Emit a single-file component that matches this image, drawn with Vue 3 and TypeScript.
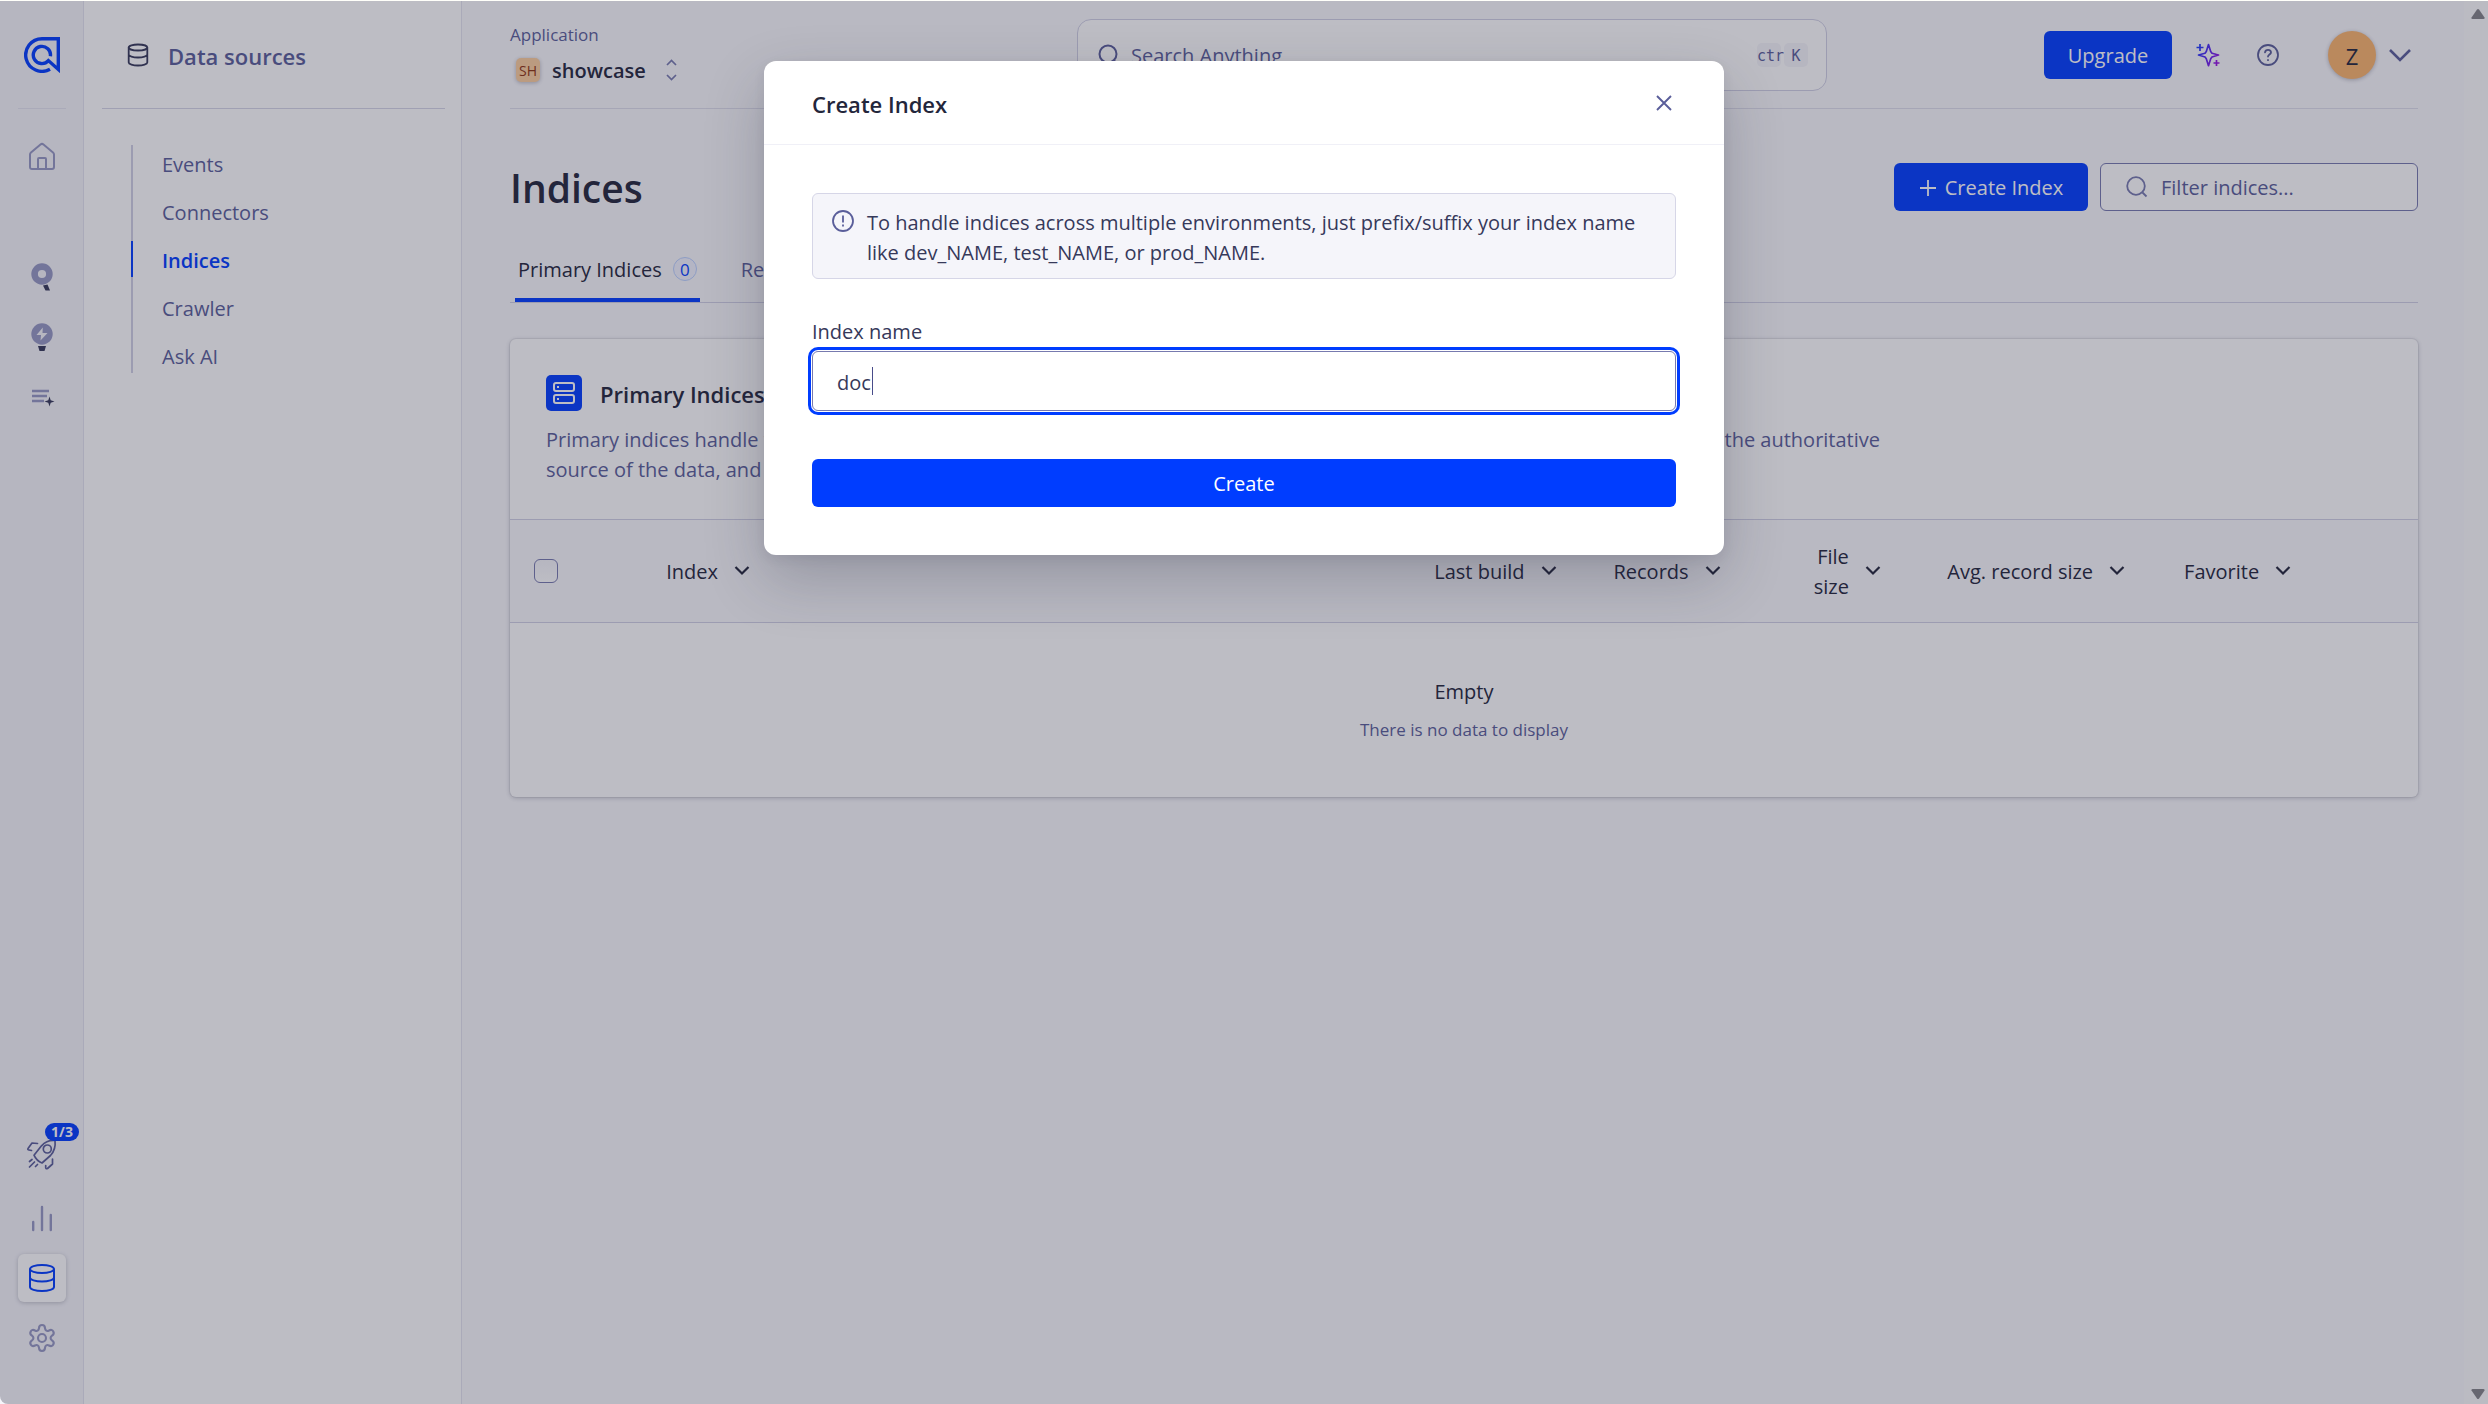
<script setup lang="ts">
import { ref } from 'vue'

interface Column {
  label: string
  width: string
  align: 'left' | 'right'
}

const navItems: string[] = ['Events', 'Connectors', 'Indices', 'Crawler', 'Ask AI']
const activeItem = ref<string>('Indices')

const columns: Column[] = [
  { label: 'Index', width: '36.1%', align: 'left' },
  { label: 'Last build', width: '12.4%', align: 'right' },
  { label: 'Records', width: '8.6%', align: 'right' },
  { label: 'File\nsize', width: '8.4%', align: 'right' },
  { label: 'Avg. record size', width: '12.8%', align: 'right' },
  { label: 'Favorite', width: '15.3%', align: 'left' },
]

const indexName = ref<string>('doc')
const filter = ref<string>('')
const allSelected = ref<boolean>(false)
</script>

<template>
  <div class="page">
    <nav class="rail" aria-label="Products">
      <a class="logo" href="#" aria-label="Home page">
        <svg width="36" height="36" viewBox="0 0 36 36" fill="none" stroke="currentColor" stroke-width="3.4">
          <path d="M26 32.2A16.3 16.3 0 1 1 18 1.7H34.3V32.4L24.4 23.6A8.6 8.6 0 1 1 26.4 19.2" />
        </svg>
      </a>
      <a class="rail-item" href="#" aria-label="Overview">
        <svg width="30" height="30" viewBox="0 0 30 30" fill="none" stroke="currentColor" stroke-width="2" stroke-linejoin="round" stroke-linecap="round">
          <path d="M3 12.5c0-1 .3-1.500 1-2.100L13.500 2.500c1-.8 2-.8 3 0L26 10.400c.7.600 1 1.100 1 2.100V25c0 1.300-.7 2-2 2H5c-1.300 0-2-.7-2-2z" />
          <path d="M11 27V17c0-.7.300-1 1-1h6c.7 0 1 .3 1 1v10" />
        </svg>
      </a>
      <div class="rail-group">
        <a class="rail-item" href="#" aria-label="Search">
          <svg width="30" height="32" viewBox="0 0 30 32">
            <circle cx="15" cy="13" r="7.400" fill="none" stroke="currentColor" stroke-width="6.600" />
            <path class="ink" d="M16 24.500l4.500-1 2.500 6h-4.500z" />
          </svg>
        </a>
        <a class="rail-item" href="#" aria-label="Recommend">
          <svg width="30" height="32" viewBox="0 0 30 32">
            <circle cx="15" cy="13" r="10.700" fill="currentColor" />
            <path class="paper" d="M15.800 6.500L9.500 14h4.500l-.5 5.500L20.500 12H15.500z" />
            <path class="ink" d="M11 25h8l-1.500 5h-5z" />
          </svg>
        </a>
        <a class="rail-item" href="#" aria-label="Merchandising">
          <svg width="30" height="24" viewBox="0 0 30 24">
            <path d="M5 6h17M5 11h15M5 16h12" stroke="currentColor" stroke-width="2.400" />
            <path class="ink" d="M22.500 11.500l1.200 3.800 3.800 1.200-3.800 1.200-1.200 3.800-1.200-3.800-3.800-1.200 3.800-1.200z" />
          </svg>
        </a>
      </div>
      <div class="rail-foot">
        <a class="rail-item rocket" href="#" aria-label="Getting started">
          <svg width="32" height="32" viewBox="0 0 32 32" fill="none" stroke="currentColor" stroke-width="1.700" stroke-linejoin="round" stroke-linecap="round">
            <path d="M29 2.500c.7 6-.8 11-4.500 15L16 25c-3-1-6.500-4.500-8-7.800l7.500-9.400C19 4 23.500 2 29 2.500z" />
            <circle cx="21.300" cy="11" r="4" />
            <path d="M11.500 5.500L6 5 2 10.500c-.4 1 0 1.500 1 1.500l2.500.5M26.500 21v5l-5 4.500c-1 .5-1.700.2-1.800-.8V27.500M3.500 23.500l2.500-2M3.500 29l5-5M9.500 28.500l2-2" />
          </svg>
          <span class="progress">1/3</span>
        </a>
        <a class="rail-item" href="#" aria-label="Observe">
          <svg width="30" height="30" viewBox="0 0 30 30" stroke="currentColor" stroke-width="2.400" stroke-linecap="round">
            <path d="M6.200 19v8M15 4v23M23.800 12v15" />
          </svg>
        </a>
        <a class="rail-item current" href="#" aria-label="Data sources">
          <svg width="30" height="30" viewBox="0 0 30 30" fill="none" stroke="currentColor" stroke-width="2">
            <ellipse cx="15" cy="6" rx="12" ry="4" />
            <path d="M3 6v18c0 2.200 5.400 4 12 4s12-1.800 12-4V6M3 14.500c0 2.200 5.400 4 12 4s12-1.800 12-4" />
          </svg>
        </a>
        <a class="rail-item" href="#" aria-label="Settings">
          <svg width="30" height="30" viewBox="0 0 30 30" fill="none" stroke="currentColor" stroke-width="2.100" stroke-linejoin="round">
            <path d="M12 5.200C12 3 13.200 2 15 2s3 1 3 3.200c.2 2.400 2 3.400 4 2.300 2-1.200 3.500-.6 4.300.9s.6 3-1.300 4.200c-1.900 1.300-1.900 3.500 0 4.800 1.900 1.200 2.100 2.700 1.300 4.200s-2.300 2.100-4.300.9c-2-1.100-3.800-.1-4 2.300C18 27 16.800 28 15 28s-3-1-3-3.200c-.2-2.400-2-3.400-4-2.300-2 1.200-3.500.6-4.300-.9s-.6-3 1.300-4.200c1.900-1.300 1.900-3.500 0-4.800-1.900-1.200-2.100-2.700-1.300-4.200s2.300-2.100 4.300-.9c2 1.100 3.800.1 4-2.300z" />
            <circle cx="15" cy="15" r="4" />
          </svg>
        </a>
      </div>
    </nav>

    <aside class="panel">
      <div class="panel-head">
        <svg width="24" height="24" viewBox="0 0 24 24" fill="none" stroke="currentColor" stroke-width="1.800">
          <ellipse cx="12" cy="4.500" rx="9.300" ry="3" />
          <path d="M2.700 4.500v15c0 1.600 4.200 3 9.300 3s9.300-1.400 9.300-3v-15M2.700 11.500c0 1.600 4.200 3 9.300 3s9.300-1.400 9.300-3" />
        </svg>
        <span>Data sources</span>
      </div>
      <ul class="panel-list">
        <li v-for="item in navItems" :key="item" :class="{ active: item === activeItem }">
          <a href="#" @click.prevent="activeItem = item">{{ item }}</a>
        </li>
      </ul>
    </aside>

    <main class="main">
      <header class="topbar">
        <div class="application">
          <span class="application-label">Application</span>
          <button class="application-picker" type="button">
            <span class="app-badge">SH</span>
            <span class="app-name">showcase</span>
            <svg width="14" height="24" viewBox="0 0 14 24" fill="none" stroke="currentColor" stroke-width="1.700">
              <path d="M3 7l4.500-4.500L12 7M3 17l4.500 4.500L12 17" />
            </svg>
          </button>
        </div>
        <button class="search" type="button">
          <svg width="24" height="24" viewBox="0 0 24 24" fill="none" stroke="currentColor" stroke-width="2">
            <circle cx="11" cy="11" r="8.500" /><path d="M17 17.500l4.500 4.500" />
          </svg>
          <span class="search-text">Search Anything</span>
          <kbd>ctr</kbd><kbd>K</kbd>
        </button>
        <div class="account">
          <button class="primary" type="button">Upgrade</button>
          <button class="plain" type="button" aria-label="Assistant">
            <svg width="24" height="24" viewBox="0 0 24 24" fill="none" stroke="url(#spark)" stroke-width="1.700" stroke-linejoin="round">
              <defs>
                <linearGradient id="spark" gradientUnits="userSpaceOnUse" x1="0" y1="6" x2="24" y2="18">
                  <stop offset="0" stop-color="#1a3dff" /><stop offset="1" stop-color="#a010e0" />
                </linearGradient>
              </defs>
              <path d="M12.500 1.500l2.200 7 1.300 1.800 6.500 1.700-6.500 2-1.300 1.700-2.200 7-2.200-7L9 14l-6.500-2L9 10.300l1.300-1.800z" />
              <path d="M4 1v7M.5 4.500h7M20.500 17v6M17.500 20h6" />
            </svg>
          </button>
          <button class="plain help" type="button" aria-label="Help">
            <svg width="24" height="24" viewBox="0 0 24 24" fill="none" stroke="currentColor" stroke-width="1.800" stroke-linecap="round">
              <circle cx="12" cy="12" r="10" />
              <path d="M9 9.300c.3-1.700 1.500-2.500 3-2.500 1.700 0 3 1 3 2.600 0 2-3 2.200-3 4.200M12 17v.2" />
            </svg>
          </button>
          <button class="plain user" type="button" aria-label="Account">
            <span class="avatar">Z</span>
            <svg width="24" height="24" viewBox="0 0 24 24" fill="none" stroke="currentColor" stroke-width="2.600">
              <path d="M2 7l10 10L22 7" />
            </svg>
          </button>
        </div>
      </header>

      <div class="title-row">
        <h1>Indices</h1>
        <button class="primary create" type="button">
          <svg width="18" height="18" viewBox="0 0 18 18" stroke="currentColor" stroke-width="1.800"><path d="M9 1v16M1 9h16" /></svg>
          Create Index
        </button>
        <label class="filter">
          <svg width="24" height="24" viewBox="0 0 24 24" fill="none" stroke="currentColor" stroke-width="1.800">
            <circle cx="11" cy="11" r="8.800" /><path d="M17.500 17.500l4 4" />
          </svg>
          <input v-model="filter" type="text" placeholder="Filter indices..." aria-label="Filter indices" />
        </label>
      </div>

      <div class="tabs" role="tablist">
        <button class="tab selected" type="button" role="tab" aria-selected="true">
          Primary Indices <span class="count">0</span>
        </button>
        <button class="tab" type="button" role="tab" aria-selected="false">Replicas</button>
      </div>

      <section class="card">
        <div class="card-head">
          <h2>
            <svg width="36" height="36" viewBox="0 0 36 36" fill="none">
              <rect class="tile" width="36" height="36" rx="5" />
              <g stroke="#fff" stroke-width="2">
                <rect x="8" y="8" width="20" height="8" rx="2" />
                <rect x="8" y="20" width="20" height="8" rx="2" />
                <path d="M11 12h2M11 24h2" />
              </g>
            </svg>
            <span>Primary Indices</span>
          </h2>
          <p>
            <span class="line"><span>Primary indices handle the storage and indexing of your records. They act as</span><span>the authoritative</span></span>
            <span class="line">source of the data, and replicas are kept in sync with them.</span>
          </p>
        </div>
        <table>
          <thead>
            <tr>
              <th class="check"><input v-model="allSelected" type="checkbox" aria-label="Select all indices" /></th>
              <th v-for="col in columns" :key="col.label" :class="col.align" :style="{ width: col.width }">
                <button type="button">
                  <span>{{ col.label }}</span>
                  <svg width="18" height="18" viewBox="0 0 18 18" fill="none" stroke="currentColor" stroke-width="2.200">
                    <path d="M2.500 5l6.500 6.500L15.500 5" />
                  </svg>
                </button>
              </th>
            </tr>
          </thead>
          <tbody>
            <tr>
              <td colspan="7">
                <strong>Empty</strong>
                <small>There is no data to display</small>
              </td>
            </tr>
          </tbody>
        </table>
      </section>
    </main>

    <div class="scroll" aria-hidden="true">
      <svg width="16" height="12" viewBox="0 0 16 12"><path d="M7 1.500q1-1 2 0l5.500 8q.5 1.500-1 1.500h-11q-1.500 0-1-1.500z" /></svg>
      <svg width="16" height="12" viewBox="0 0 16 12"><path d="M7 10.500q1 1 2 0l5.500-8q.5-1.500-1-1.500h-11q-1.500 0-1 1.500z" /></svg>
    </div>

    <div class="overlay">
      <form class="modal" role="dialog" aria-modal="true" aria-labelledby="modal-title" @submit.prevent>
        <header>
          <h2 id="modal-title"><span>Create Index</span></h2>
          <button class="plain" type="button" aria-label="Close">
            <svg width="24" height="24" viewBox="0 0 24 24" stroke="currentColor" stroke-width="1.900"><path d="M5 5l14 14M19 5L5 19" /></svg>
          </button>
        </header>
        <div class="modal-body">
          <div class="note">
            <svg width="24" height="24" viewBox="0 0 24 24" fill="none" stroke="currentColor" stroke-width="1.800">
              <circle cx="12" cy="12" r="10" /><path d="M12 6.500v7M12 15.500v2" />
            </svg>
            <p>To handle indices across multiple environments, just prefix/suffix your index name<br />like dev_NAME, test_NAME, or prod_NAME.</p>
          </div>
          <label for="index-name">Index name</label>
          <div class="field">
            <input id="index-name" v-model="indexName" type="text" autocomplete="off" />
            <span class="caret" aria-hidden="true"></span>
          </div>
          <button class="primary" type="submit">Create</button>
        </div>
      </form>
    </div>
  </div>
</template>

<style>
body {
  margin: 0;
  background: #fff;
}
</style>

<style scoped>
* {
  box-sizing: border-box;
}
.page {
  position: relative;
  display: flex;
  min-height: 100vh;
  border-top: 1px solid #fffffa;
  background: #fafafd;
  color: #23263b;
  font: 400 20px/30px "Open Sans", "Noto Sans", sans-serif;
}
svg {
  display: block;
  flex: none;
}
a {
  color: inherit;
  text-decoration: none;
}
button {
  padding: 0;
  border: 0;
  background: none;
  color: inherit;
  font: inherit;
  cursor: pointer;
}
h1, h2, p, ul {
  margin: 0;
  padding: 0;
  font-weight: 600;
}

.rail {
  display: flex;
  flex-direction: column;
  width: 84px;
  padding: 0 17px 42px 18px;
  border-right: 1px solid #e4e4f0;
  background: #f5f5fa;
  color: #9698c3;
}
.logo {
  display: flex;
  align-items: center;
  justify-content: center;
  height: 108px;
  border-bottom: 1px solid #e4e4f0;
  color: #003dff;
}
.rail-item {
  position: relative;
  display: flex;
  align-items: center;
  justify-content: center;
  height: 48px;
  border-radius: 6px;
}
.logo + .rail-item {
  margin-top: 24px;
}
.rail-group {
  display: grid;
  gap: 12px;
  margin-top: 72px;
}
.rail-foot {
  display: grid;
  gap: 12px;
  margin-top: auto;
}
.rocket {
  margin-bottom: 4px;
  color: #5a5e9a;
}
.progress {
  position: absolute;
  top: -7px;
  right: -13px;
  width: 34px;
  height: 18px;
  border-radius: 9px;
  background: #003dff;
  color: #fff;
  font-size: 14px;
  font-weight: 700;
  line-height: 18px;
  text-align: center;
}
.current {
  background: #fff;
  box-shadow: 0 1px 4px rgba(35, 38, 59, 0.25);
  color: #003dff;
}
.ink {
  fill: #36395a;
}
.paper {
  fill: #f5f5fa;
}

.panel {
  width: 378px;
  padding: 0 16px 0 18px;
  border-right: 1px solid #e4e4f0;
  background: #fff;
  color: #5a5e9a;
}
.panel-head {
  display: flex;
  align-items: center;
  gap: 18px;
  height: 108px;
  padding-left: 24px;
  border-bottom: 1px solid #d6d6e7;
  font-size: 22px;
  font-weight: 600;
}
.panel-head span,
.app-name,
.search-text,
h2 span,
th span {
  padding-top: 2px;
}
.panel-head svg {
  color: #36395a;
}
.panel-list {
  display: grid;
  gap: 12px;
  margin: 36px 0 0 29px;
  background: linear-gradient(#d0d0e4, #d0d0e4) left / 2px 100% no-repeat;
  font-weight: 400;
  list-style: none;
}
.panel-list li {
  height: 36px;
  padding-left: 31px;
  line-height: 40px;
}
.panel-list .active {
  padding-left: 29px;
  border-left: 2px solid #003dff;
  color: #003dff;
  font-weight: 600;
}

.main {
  flex: 1;
  min-width: 0;
  padding: 0 46px 0 48px;
}
.topbar {
  display: grid;
  grid-template-columns: 567fr 750px 591fr;
  align-items: center;
  height: 108px;
  border-bottom: 1px solid #dfdfeb;
}
.application-label {
  display: block;
  padding-top: 2px;
  color: #5a5e9a;
  font-size: 17px;
  line-height: 24px;
}
.application-picker {
  display: flex;
  align-items: center;
  gap: 12px;
  padding: 7px 0 3px 6px;
  font-weight: 600;
}
.application-picker svg {
  margin-left: 6px;
  color: #777aaf;
}
.app-badge {
  width: 24px;
  height: 24px;
  border-radius: 5px;
  background: #fdcf9e;
  box-shadow: 0 1px 4px rgba(35, 38, 59, 0.3);
  color: #8f3410;
  font-size: 14px;
  font-weight: 400;
  line-height: 25px;
}
.search {
  display: flex;
  align-items: center;
  height: 72px;
  padding: 0 18px 0 19px;
  border: 1px solid #d0d0e4;
  border-radius: 14px;
  background: #fff;
  color: #5a5e9a;
}
.search-text {
  flex: 1;
  padding-left: 10px;
  text-align: left;
}
kbd {
  width: 24px;
  height: 24px;
  margin-left: 3px;
  border-radius: 5px;
  background: #f5f5fa;
  font: 15px/26px "DejaVu Sans Mono", monospace;
}
.account {
  display: flex;
  align-items: center;
  justify-content: flex-end;
}
.primary {
  height: 48px;
  padding-top: 2px;
  border-radius: 6px;
  background: #003dff;
  color: #fff;
}
.account .primary {
  width: 128px;
}
.plain {
  color: #5a5e9a;
}
.account .plain {
  margin-left: 24px;
}
.account .help {
  margin-left: 36px;
}
.account .user {
  display: flex;
  align-items: center;
  gap: 12px;
  margin-left: 48px;
  padding-right: 6px;
}
.avatar {
  width: 48px;
  height: 48px;
  border-radius: 50%;
  background: #fbb56c;
  box-shadow: 0 1px 4px rgba(35, 38, 59, 0.3);
  color: #23263b;
  font-size: 22px;
  line-height: 50px;
}

.title-row {
  display: flex;
  align-items: center;
  margin-top: 54px;
}
h1 {
  flex: 1;
  padding-top: 2px;
  font-size: 39px;
  line-height: 46px;
}
.create {
  display: flex;
  align-items: center;
  justify-content: center;
  gap: 8px;
  width: 194px;
}
.filter {
  display: flex;
  align-items: center;
  width: 318px;
  height: 48px;
  margin-left: 12px;
  padding-left: 24px;
  border: 1px solid #777aaf;
  border-radius: 6px;
  background: #fff;
  color: #777aaf;
}
.filter input {
  width: 200px;
  padding: 2px 0 0 12px;
  border: 0;
  background: none;
  font: inherit;
}
.filter input::placeholder {
  color: #5a5e9a;
  opacity: 1;
}

.tabs {
  display: flex;
  gap: 38px;
  margin-top: 24px;
  padding-left: 5px;
  border-bottom: 1px solid #d0d0e4;
}
.tab {
  display: flex;
  align-items: center;
  gap: 11px;
  height: 67px;
  padding: 6px 3px 0;
  border-bottom: 4px solid transparent;
  color: #5a5e9a;
}
.tab.selected {
  border-color: #003dff;
  color: #23263b;
}
.count {
  width: 24px;
  height: 24px;
  margin-bottom: 2px;
  border: 1px solid #bbd1ff;
  border-radius: 50%;
  background: #f2f4ff;
  color: #003dff;
  font-size: 17px;
  line-height: 23px;
}

.card {
  margin-top: 36px;
  border-radius: 6px;
  background: #fff;
  box-shadow: 0 0 0 1px rgba(35, 38, 59, 0.06), 0 1px 5px rgba(35, 38, 59, 0.25);
}
.card-head {
  height: 180px;
  padding: 36px;
}
h2 {
  display: flex;
  align-items: center;
  gap: 18px;
  font-size: 22px;
  line-height: 34px;
}
.tile {
  fill: #003dff;
}
.card-head p {
  max-width: 1334px;
  margin-top: 14px;
  color: #5a5e9a;
  font-weight: 400;
}
.line {
  display: flex;
  justify-content: space-between;
  white-space: nowrap;
}
table {
  width: 100%;
  border-collapse: collapse;
  table-layout: fixed;
}
th {
  height: 103px;
  padding: 0;
  border: solid #d0d0e4;
  border-width: 1px 0;
  background: #fafafd;
  font-weight: 400;
  text-align: left;
}
.check {
  padding-left: 24px;
}
.check input {
  display: block;
  width: 24px;
  height: 24px;
  margin: 0;
  border: 1px solid #777aaf;
  border-radius: 6px;
  background: linear-gradient(#f5f5fa, #fff);
  appearance: none;
}
th button {
  display: inline-flex;
  align-items: center;
  gap: 15px;
  text-align: inherit;
  white-space: pre-line;
  vertical-align: middle;
}
th.left {
  padding-left: 34px;
}
th.right + th.left {
  padding-left: 58px;
}
th.right {
  text-align: right;
}
td {
  height: 174px;
  padding: 2px 0 0;
  text-align: center;
}
td strong,
td small {
  display: block;
  font-weight: 400;
}
td small {
  margin-top: 8px;
  color: #5a5e9a;
  font-size: 17px;
}

.scroll {
  display: flex;
  flex-direction: column;
  align-items: center;
  justify-content: space-between;
  width: 24px;
  padding: 7px 0 4px 4px;
  background: #fcfcfc;
  fill: #858589;
}

.overlay {
  position: absolute;
  inset: 0;
  padding-top: 60px;
  border-bottom-left-radius: 8px;
  background: rgba(35, 38, 59, 0.3);
}
.modal {
  width: 960px;
  margin: 0 auto;
  border-radius: 12px;
  background: #fff;
  box-shadow: 0 24px 60px rgba(35, 38, 59, 0.24), 0 4px 12px rgba(35, 38, 59, 0.08);
}
.modal header {
  display: flex;
  align-items: center;
  justify-content: space-between;
  height: 84px;
  padding: 0 48px;
  border-bottom: 1px solid #f0f0f7;
}
.modal-body {
  display: grid;
  padding: 48px;
}
.note {
  display: flex;
  gap: 12px;
  padding: 14px 18px 10px;
  border: 1px solid #d6d6e7;
  border-radius: 6px;
  background: #f5f5fa;
  color: #5a5e9a;
}
.note svg {
  margin-top: 1px;
}
.note p {
  color: #36395a;
  font-weight: 400;
  white-space: nowrap;
}
.modal-body label {
  margin: 38px 0 4px;
  color: #36395a;
}
.field {
  position: relative;
}
.field input {
  display: block;
  width: 100%;
  height: 60px;
  padding: 2px 24px 0;
  border: 1px solid #777aaf;
  border-radius: 6px;
  outline: 0;
  box-shadow: 0 0 0 1px #fff, 0 0 0 4px #003dff;
  color: #36395a;
  font: inherit;
}
.caret {
  position: absolute;
  top: 16px;
  left: 60px;
  width: 1px;
  height: 28px;
  background: #484c8a;
}
.modal-body .primary {
  margin-top: 48px;
}
</style>
